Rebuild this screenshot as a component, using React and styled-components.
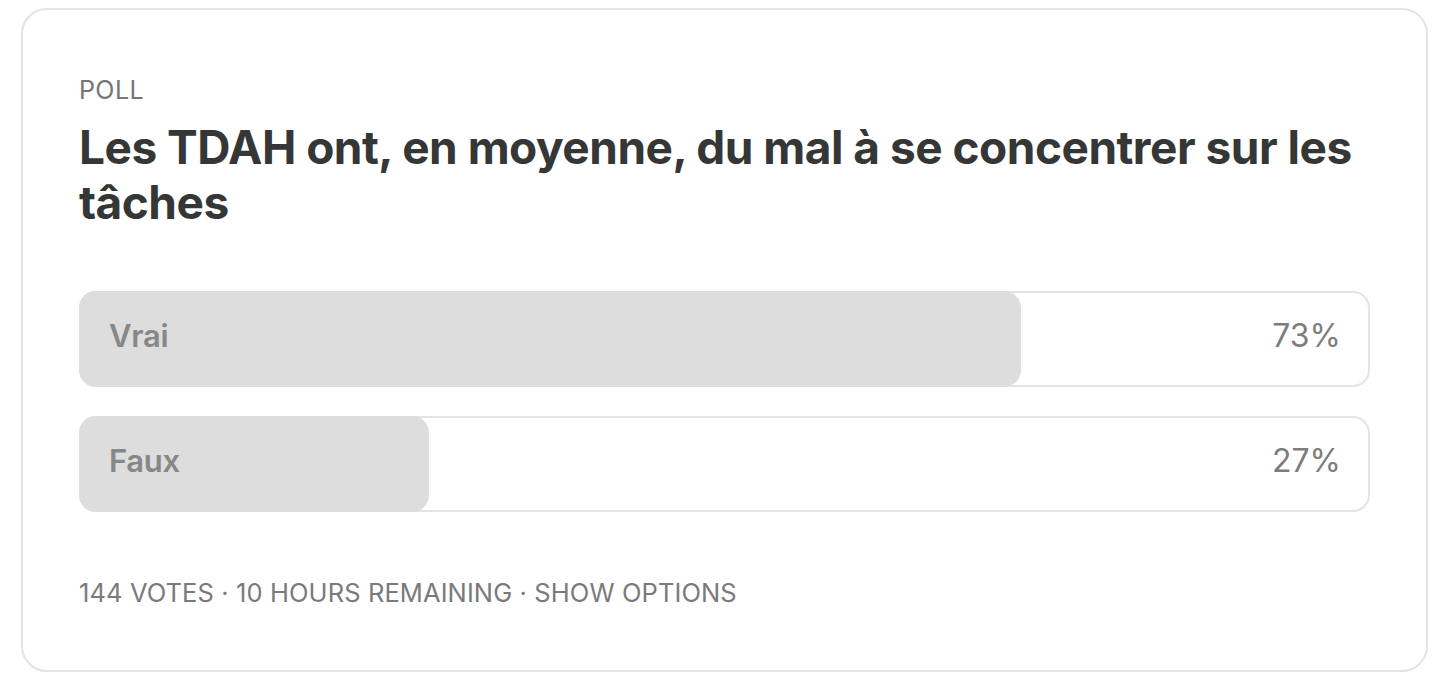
import React from "react";
import styled, { createGlobalStyle } from "styled-components";

const GlobalStyle = createGlobalStyle`
  html, body {
    margin: 0;
    padding: 0;
    background: #ffffff;
  }
  body {
    font-family: Inter, "Liberation Sans", sans-serif;
    -webkit-font-smoothing: antialiased;
  }
`;

const Page = styled.div`
  padding: 8px 0 0 21px;
`;

const Card = styled.div`
  box-sizing: border-box;
  width: 1407px;
  height: 664px;
  border: 2px solid #e3e3e3;
  border-radius: 26px;
  padding: 65px 56px 0 56px;
  display: flex;
  flex-direction: column;
`;

const Kicker = styled.div`
  font-size: 25px;
  line-height: 30px;
  color: #757575;
  letter-spacing: 0.4px;
`;

const Question = styled.h2`
  margin: 15px 0 0;
  font-size: 46px;
  line-height: 55px;
  font-weight: 700;
  color: #353636;
  letter-spacing: -0.5px;
`;

const Options = styled.div`
  margin-top: 61px;
  display: flex;
  flex-direction: column;
  gap: 29px;
`;

const Bar = styled.div`
  position: relative;
  box-sizing: border-box;
  height: 96px;
  border: 2px solid #e4e4e4;
  border-radius: 17px;
  display: flex;
  align-items: center;
  justify-content: space-between;
  padding: 0 27px 7px 28px;
`;

const Fill = styled.div`
  position: absolute;
  top: -2px;
  bottom: -2px;
  left: -2px;
  background: #dddddd;
  border-radius: 17px;
`;

const Label = styled.span`
  position: relative;
  font-size: 31px;
  font-weight: 600;
  color: #878787;
  letter-spacing: -0.3px;
`;

const Percent = styled.span`
  position: relative;
  font-size: 32px;
  font-weight: 400;
  color: #7d7d7d;
`;

const Footer = styled.div`
  margin-top: 66px;
  font-size: 25.5px;
  line-height: 30px;
  color: #7a7a7a;
  letter-spacing: 0.1px;
`;

const options = [
  { label: "Vrai", pct: 73, fill: 942 },
  { label: "Faux", pct: 27, fill: 350 },
];

const App = () => (
  <>
    <GlobalStyle />
    <Page>
      <Card>
        <Kicker>POLL</Kicker>
        <Question>Les TDAH ont, en moyenne, du mal à se concentrer sur les tâches</Question>
        <Options>
          {options.map(o => (
            <Bar key={o.label}>
              <Fill style={{ width: `${o.fill}px` }} />
              <Label>{o.label}</Label>
              <Percent>{o.pct}%</Percent>
            </Bar>
          ))}
        </Options>
        <Footer>144 VOTES · 10 HOURS REMAINING · SHOW OPTIONS</Footer>
      </Card>
    </Page>
  </>
);

export default App;
